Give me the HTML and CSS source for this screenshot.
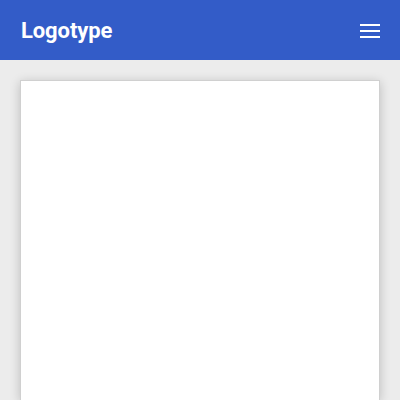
FILE: index.html
```html
<!DOCTYPE html>
<html>
<head>
<meta charset="utf-8">
<link rel="stylesheet" href="styles.css">
</head>
<body>
<header class="header">
  <div class="logo">Logotype</div>
  <button class="menu" aria-label="Menu">
    <svg width="20" height="14" viewBox="0 0 20 14"><rect x="0" y="0" width="20" height="2" fill="#fff"/><rect x="0" y="6" width="20" height="2" fill="#fff"/><rect x="0" y="12" width="20" height="2" fill="#fff"/></svg>
  </button>
</header>
<main class="main">
  <div class="card"></div>
</main>
</body>
</html>
```
FILE: styles.css
```css
html, body { margin: 0; padding: 0; }
body { background: #ececec; font-family: Roboto, "Liberation Sans", sans-serif; overflow: hidden; height: 400px; }
.header { height: 60px; background: #335cc8; display: flex; align-items: center; justify-content: space-between; padding: 0 20px 0 21px; box-sizing: border-box; }
.logo { color: #fff; font-weight: 700; font-size: 22px; letter-spacing: -0.1px; }
.menu { background: none; border: 0; padding: 0; width: 20px; height: 14px; display: block; margin-top: 1px; }
.menu svg { display: block; }
.main { padding: 20px 20px 0 20px; height: 340px; box-sizing: border-box; }
.card { background: #fff; height: 320px; box-sizing: border-box; border: 1px solid #d0d0d0; border-bottom: 0; box-shadow: 0 2px 10px rgba(0,0,0,0.2); }
```
